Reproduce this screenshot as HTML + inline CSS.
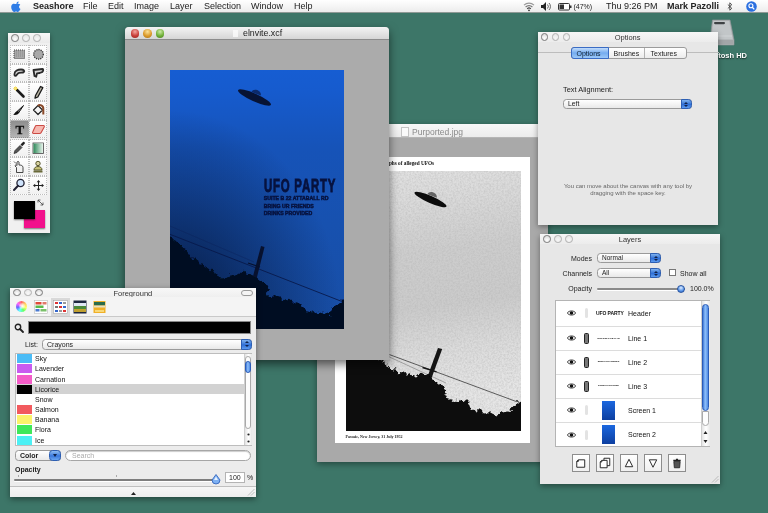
<!DOCTYPE html>
<html>
<head>
<meta charset="utf-8">
<title>Seashore</title>
<style>
html,body{margin:0;padding:0;}
body{width:768px;height:513px;overflow:hidden;background:#3d7668;font-family:"Liberation Sans",sans-serif;font-size:8px;color:#222;position:relative;filter:blur(0.35px);}
.a{position:absolute;}
.t{position:absolute;white-space:nowrap;line-height:1;}
.win{position:absolute;background:#ebebeb;box-shadow:0 2px 6px rgba(0,0,0,.45);}
.tb{position:absolute;left:0;top:0;right:0;background:linear-gradient(#f6f6f6,#e0e0e0);border-bottom:1px solid #bdbdbd;}
.ttl{position:absolute;left:0;right:0;text-align:center;line-height:1;color:#333;}
.dot{position:absolute;width:5.500px;height:5.500px;border-radius:50%;border:1px solid #7a7a7a;background:radial-gradient(circle at 50% 70%,#fff,#d4d4d4);}
.pop{position:absolute;border:1px solid #9a9a9a;border-radius:3.500px;background:linear-gradient(#ffffff,#e9e9e9);box-sizing:border-box;}
.pop i{position:absolute;right:-1px;top:-1px;bottom:-1px;width:11px;border-radius:0 3.500px 3.500px 0;background:linear-gradient(#7fb2ee,#2f6fd6 55%,#5d9cf0);border:1px solid #2c5fb5;box-sizing:border-box;}
.pop i:before{content:"";position:absolute;left:2.5px;top:1.5px;border:2px solid transparent;border-top:0;border-bottom:2.5px solid #10224a;}
.pop i:after{content:"";position:absolute;left:2.5px;bottom:1.5px;border:2px solid transparent;border-bottom:0;border-top:2.5px solid #10224a;}
</style>
</head>
<body>
<!-- MENUBAR -->
<div class="a" id="menubar" style="left:0;top:0;width:768px;height:13px;background:linear-gradient(#ffffff,#ececec);border-bottom:1px solid #8f9a96;box-sizing:border-box;z-index:50;">
<svg class="a" style="left:11px;top:1px" width="11" height="11" viewBox="0 0 22 22"><path d="M15.2 1c.1 1.300-.4 2.500-1.200 3.400-.8.900-2 1.600-3.200 1.500-.1-1.200.5-2.500 1.200-3.300C12.800 1.700 14.100 1.100 15.200 1zM18.900 16c-.5 1.200-.8 1.700-1.400 2.700-.900 1.400-2.200 3.200-3.800 3.200-1.400 0-1.800-.9-3.700-.9-1.900 0-2.300.9-3.700.9-1.600 0-2.800-1.600-3.700-3-2.600-3.900-2.800-8.500-1.200-10.900 1.100-1.700 2.900-2.700 4.600-2.700 1.700 0 2.800.9 4.200.9 1.400 0 2.200-.9 4.200-.9 1.500 0 3.100.8 4.200 2.200-3.700 2-3.100 7.300.3 8.500z" fill="#2f7de6"/></svg>
<span class="t" style="left:33px;top:2px;font-size:9px;font-weight:bold;color:#222" id="m1">Seashore</span>
<span class="t" style="left:83px;top:2px;font-size:9px" id="m2">File</span>
<span class="t" style="left:108px;top:2px;font-size:9px" id="m3">Edit</span>
<span class="t" style="left:134px;top:2px;font-size:9px" id="m4">Image</span>
<span class="t" style="left:170px;top:2px;font-size:9px" id="m5">Layer</span>
<span class="t" style="left:204px;top:2px;font-size:9px" id="m6">Selection</span>
<span class="t" style="left:251px;top:2px;font-size:9px" id="m7">Window</span>
<span class="t" style="left:294px;top:2px;font-size:9px" id="m8">Help</span>
<svg class="a" style="left:523px;top:1px" width="12" height="11" viewBox="0 0 12 11"><path d="M1 4.200a7 7 0 0 1 10 0" fill="none" stroke="#999" stroke-width="1.100"/><path d="M2.600 6a4.800 4.800 0 0 1 6.800 0" fill="none" stroke="#777" stroke-width="1.100"/><path d="M4.200 7.800a2.600 2.600 0 0 1 3.600 0" fill="none" stroke="#444" stroke-width="1.100"/><circle cx="6" cy="9.300" r=".9" fill="#333"/></svg>
<svg class="a" style="left:541px;top:2px" width="10" height="9" viewBox="0 0 10 9"><path d="M0 3h2l3-3v9l-3-3h-2z" fill="#222"/><path d="M6.500 2.500a3 3 0 0 1 0 4M8 1a5 5 0 0 1 0 7" fill="none" stroke="#555" stroke-width=".9"/></svg>
<svg class="a" style="left:558px;top:3px" width="14" height="8" viewBox="0 0 14 8"><rect x=".5" y=".5" width="11" height="6.500" rx="1" fill="#fff" stroke="#333"/><rect x="12" y="2.500" width="1.500" height="2.500" fill="#333"/><rect x="1.500" y="1.500" width="4.500" height="4.500" fill="#333"/></svg>
<span class="t" style="left:573.500px;top:3.300px;font-size:7px" id="m9">(47%)</span>
<span class="t" style="left:606px;top:2px;font-size:9px" id="m10">Thu 9:26 PM</span>
<span class="t" style="left:667px;top:2px;font-size:9px;font-weight:bold;color:#222" id="m11">Mark Pazolli</span>
<svg class="a" style="left:727px;top:2px" width="6" height="9" viewBox="0 0 6 9"><path d="M.8 2.500l4 3.800-2 1.900v-7.400l2 1.900-4 3.800" fill="none" stroke="#333" stroke-width=".8"/></svg>
<svg class="a" style="left:746px;top:1px" width="11" height="11" viewBox="0 0 11 11"><circle cx="5.500" cy="5.500" r="5.300" fill="#2a6fe0"/><circle cx="4.900" cy="4.800" r="2" fill="none" stroke="#fff" stroke-width="1.100"/><path d="M6.300 6.300l2 2.100" stroke="#fff" stroke-width="1.300"/></svg>
</div>

<!-- DESKTOP ICON -->
<div id="hd" class="a" style="left:700px;top:16px;width:68px;height:50px">
<svg class="a" style="left:9px;top:3px" width="26" height="27" viewBox="0 0 26 27"><path d="M3.500 1h17.500l4 20v5h-24v-5z" fill="#b4b8ba" stroke="#8f9496" stroke-width=".7"/><path d="M4.500 2h15.500l3.500 18h-21z" fill="#c2c6c8"/><path d="M1.500 21h23v4.500h-23z" fill="#a2a6a8"/><rect x="5" y="3" width="11" height="2.200" rx="1.100" fill="#3e4244"/><path d="M3 17h20" stroke="#d0d4d6" stroke-width="1"/></svg>
<span class="t" style="left:-3px;top:35.500px;font-size:7.500px;font-weight:bold;color:#fff;text-shadow:0 1px 1.500px rgba(0,0,0,.7)" id="hd-l">Macintosh HD</span>
</div>

<!-- WINDOWS -->
<div class="win" id="w-purported" style="left:317px;top:124px;width:231px;height:338px;background:#a9a9a9;border-radius:4px 4px 0 0;box-shadow:0 2px 6px rgba(0,0,0,.4)">
<div class="tb" style="height:13px;border-radius:4px 4px 0 0;background:linear-gradient(#f7f7f7,#ececec);border-bottom:1px solid #b5b5b5"></div>
<div class="a" style="left:84px;top:3px;width:6px;height:8px;background:#fafafa;border:0.500px solid #c4c4c4"></div>
<span class="t" style="left:95px;top:3px;font-size:8.500px;color:#8a8a8a;margin-top:.5px" id="p-title">Purported.jpg</span>
<div class="a" style="left:18px;top:33px;width:195px;height:286px;background:#fff"></div>
<span class="t" style="right:114px;top:36px;font-size:6.500px;font-weight:bold;font-family:'Liberation Serif',serif;color:#111;transform-origin:100% 50%;transform:scaleX(.81)" id="p-head">photographs of alleged UFOs</span>
<div class="a" id="photo" style="left:29px;top:47px;width:175px;height:260px;overflow:hidden;background:linear-gradient(172deg,#e2e2e2 0%,#dcdcdc 12%,#cdcdcd 32%,#cbcbcb 52%,#dcdcdc 68%,#e6e6e6 85%)">
<svg class="a" style="left:0;top:0" width="175" height="260" viewBox="0 0 175 260">
<defs><filter id="nz" x="0" y="0" width="100%" height="100%"><feTurbulence type="fractalNoise" baseFrequency=".55" numOctaves="3" seed="4"/><feColorMatrix values="0 0 0 0 .45  0 0 0 0 .45  0 0 0 0 .45  1.600 0 0 0 -.55"/></filter>
<filter id="rough" x="-5%" y="-5%" width="110%" height="110%"><feTurbulence type="fractalNoise" baseFrequency=".22" numOctaves="2" seed="9" result="t"/><feDisplacementMap in="SourceGraphic" in2="t" scale="7" xChannelSelector="R" yChannelSelector="G"/></filter></defs>
<rect width="175" height="260" filter="url(#nz)" opacity=".55"/>
<g transform="translate(84.500,28.500) rotate(24)"><ellipse cx="0" cy="0" rx="17.500" ry="3.500" fill="#0c0c0c"/><path d="M-5 -3.600c0-5 9-5.500 10-.5z" fill="#666"/></g>
<path d="M43.500 183.600L171 230.800" stroke="#3a3a3a" stroke-width=".8" fill="none"/>
<path d="M43.500 186L100 212" stroke="#666" stroke-width=".5" fill="none"/>
<path d="M92 177l4.200 1-22 60-4.200-1.200z" fill="#141414"/>
<path d="M76.500 196.500l14 4.300" stroke="#141414" stroke-width="1.400"/>
<g filter="url(#rough)"><path d="M-5 265L-5 179 0.0 178.8 2.3 179.6 4.7 181.8 7.0 179.8 9.3 180.4 11.7 181.1 14.0 179.4 16.5 181.7 19.0 183.0 21.5 184.5 24.0 181.6 26.5 183.4 29.0 183.0 31.2 187.8 33.5 188.5 35.8 186.5 38.0 192.4 41.0 195.3 44.0 196.8 46.5 198.6 49.0 198.3 51.5 198.8 54.0 202.6 56.5 201.5 59.0 203.5 61.2 203.5 63.4 202.3 65.6 204.2 67.8 203.9 70.0 205.7 72.2 203.7 74.4 203.9 76.6 202.8 78.8 203.2 81.0 201.8 83.7 202.6 86.3 207.8 89.0 209.5 91.3 211.4 93.7 213.4 96.0 214.1 99.0 220.6 102.0 227.9 104.7 227.2 107.3 231.0 110.0 229.5 112.3 230.9 114.7 227.8 117.0 229.9 119.2 231.4 121.4 229.3 123.6 232.4 125.8 238.0 128.0 237.8 130.4 241.2 132.9 239.1 135.3 238.3 137.7 241.8 140.1 243.4 142.6 241.6 145.0 241.5 147.4 242.6 149.9 245.6 152.3 244.5 154.7 241.1 157.1 241.6 159.6 240.7 162.0 240.4 164.5 241.3 167.0 235.4 171.0 231.3 175.0 232.0 L180 232 L180 265z" fill="#0a0a0a"/></g>
</svg>
</div>
<span class="t" style="left:28.500px;top:310.500px;font-size:4px;font-weight:bold;font-family:'Liberation Serif',serif;color:#222" id="p-cap">Passaic, New Jersey, 31 July 1952</span>
</div>
<div class="win" id="w-einvite" style="left:125px;top:27px;width:264px;height:332.500px;background:#ababab;border-radius:4px 4px 0 0;box-shadow:0 4px 10px rgba(0,0,0,.55)">
<div class="tb" style="height:12px;border-radius:4px 4px 0 0;background:linear-gradient(#f4f4f4,#d6d6d6);border-bottom:1px solid #8c8c8c"></div>
<div class="a" style="left:5.500px;top:2px;width:8.500px;height:8.500px;border-radius:50%;background:radial-gradient(circle at 50% 30%,#f5a8a0,#c8403a 55%,#9a2620)"></div>
<div class="a" style="left:18px;top:2px;width:8.500px;height:8.500px;border-radius:50%;background:radial-gradient(circle at 50% 30%,#fbe29a,#dc9a2a 55%,#a8741a)"></div>
<div class="a" style="left:30.500px;top:2px;width:8.500px;height:8.500px;border-radius:50%;background:radial-gradient(circle at 50% 30%,#cdeaa8,#72b23a 55%,#4a7e22)"></div>
<div class="a" style="left:108px;top:2.500px;width:5px;height:7px;background:#fdfdfd;opacity:.75"></div>
<span class="t" style="left:118px;top:2px;font-size:8.800px;color:#222" id="e-title">elnvite.xcf</span>
<div class="a" id="poster" style="left:45px;top:43px;width:174px;height:259px;overflow:hidden;background:linear-gradient(#165dd2 0%,#165bce 8%,#1653b8 30%,#1751af 60%,#184ea5 100%)">
<svg class="a" style="left:0;top:0" width="174" height="259" viewBox="0 0 174 259">
<defs><radialGradient id="pg" gradientUnits="userSpaceOnUse" cx="0" cy="240" r="200" gradientTransform="scale(.85,1)"><stop offset="0" stop-color="#03102e" stop-opacity=".85"/><stop offset="1" stop-color="#03102e" stop-opacity="0"/></radialGradient></defs>
<rect width="174" height="259" fill="url(#pg)"/>
<g transform="translate(84.500,27.500) rotate(24)"><ellipse cx="0" cy="0" rx="18" ry="3.900" fill="#071334"/><path d="M-5 -3.800c0-5 9-5.500 10-.5z" fill="#0c2a6a"/></g>
<path d="M0 164.300L174 232.300" stroke="#081a4c" stroke-width=".9" fill="none"/>
<path d="M0 156L84 192" stroke="#0a2058" stroke-width=".6" fill="none" opacity=".6"/>
<path d="M91 176l3.500 1-9 36-4-1z" fill="#07112e"/>
<path d="M78 193l12 4" stroke="#07112e" stroke-width="1.200"/>
<g filter="url(#rough)"><path d="M-5 265L-5 166 0.0 166.8 3.2 170.2 6.3 171.4 9.5 174.5 12.7 178.6 15.8 180.1 19.0 183.9 21.8 189.2 24.7 188.3 27.5 189.8 30.3 194.8 33.2 194.2 36.0 197.5 38.8 198.1 41.5 201.1 44.2 201.2 47.0 205.6 49.7 207.6 52.3 207.1 55.0 209.1 58.0 207.8 61.0 204.1 64.0 206.1 67.0 204.4 70.0 202.9 73.0 201.4 76.0 204.9 79.0 202.9 82.0 205.2 85.0 207.2 88.0 207.7 91.0 209.9 94.5 212.5 98.0 219.3 97.0 224.8 99.6 227.5 102.2 227.9 104.8 225.0 107.4 225.8 110.0 226.8 112.5 230.7 115.0 229.1 117.5 230.6 120.0 229.8 122.5 231.4 125.0 231.5 127.8 232.9 130.6 235.6 133.4 237.2 136.2 240.2 139.0 240.8 141.5 242.3 144.0 242.3 146.5 243.3 149.0 242.3 151.5 240.4 154.0 243.8 156.5 244.7 159.0 244.8 162.5 238.8 166.0 234.9 168.7 231.1 171.3 232.1 174.0 229.0 L180 228 L180 265z" fill="#040b20"/></g>
</svg>
<span class="t" id="ufo" style="left:93.500px;top:105.700px;font-size:19px;font-weight:bold;color:#07123e;letter-spacing:1.300px;-webkit-text-stroke:.9px #07123e;transform-origin:0 0;transform:scaleX(.6)">UFO PARTY</span>
<span class="t" id="l1" style="left:93.800px;top:126.100px;font-size:5.200px;font-weight:bold;color:#07123e;letter-spacing:0;-webkit-text-stroke:.45px #07123e">SUITE B 22 ATTABALL RD</span>
<span class="t" id="l2" style="left:93.800px;top:133.700px;font-size:5.200px;font-weight:bold;color:#07123e;letter-spacing:0;-webkit-text-stroke:.45px #07123e">BRING UR FRIENDS</span>
<span class="t" id="l3" style="left:93.800px;top:141.300px;font-size:5.200px;font-weight:bold;color:#07123e;letter-spacing:0;-webkit-text-stroke:.45px #07123e">DRINKS PROVIDED</span>
</div>
</div>
<div class="win" id="w-tools" style="left:8px;top:33px;width:42px;height:200px;background:#f0f0f0;box-shadow:0 2px 5px rgba(0,0,0,.4)">
<svg width="0" height="0" class="a"><defs><linearGradient id="gr" x1="0" x2="1"><stop offset="0" stop-color="#2f8a5a"/><stop offset="1" stop-color="#e8f4ec"/></linearGradient></defs></svg>
<div class="tb" style="height:10px;border-bottom:0;background:linear-gradient(#f8f8f8,#eaeaea)"></div>
<div class="dot" style="left:3px;top:1px"></div><div class="dot" style="left:14px;top:1px;opacity:.55"></div><div class="dot" style="left:25px;top:1px;opacity:.55"></div>
<div class="a" style="left:2px;top:12.0px;width:18.700px;height:18.700px;background:linear-gradient(#ffffff,#f1f1f1);border:1px dotted #bdbdbd;box-sizing:border-box"><svg class="a" style="left:-.7px;top:-.7px" width="18" height="18" viewBox="0 0 18 18"><rect x="4" y="5" width="10.500" height="8.500" fill="#a9a9a9" stroke="#444" stroke-dasharray="1 1" stroke-width="1"/><path d="M4 7h10.500M4 9h10.500M4 11h10.500" stroke="#777" stroke-width=".6" stroke-dasharray="1 1"/></svg></div><div class="a" style="left:20.7px;top:12.0px;width:18.700px;height:18.700px;background:linear-gradient(#ffffff,#f1f1f1);border:1px dotted #bdbdbd;box-sizing:border-box"><svg class="a" style="left:-.7px;top:-.7px" width="18" height="18" viewBox="0 0 18 18"><circle cx="9.500" cy="9.300" r="4.800" fill="#a9a9a9" stroke="#333" stroke-dasharray="1.200 1" stroke-width="1.300"/></svg></div><div class="a" style="left:2px;top:30.7px;width:18.700px;height:18.700px;background:linear-gradient(#ffffff,#f1f1f1);border:1px dotted #bdbdbd;box-sizing:border-box"><svg class="a" style="left:-.7px;top:-.7px" width="18" height="18" viewBox="0 0 18 18"><path d="M4.500 10c0-3 3.500-4.500 6.500-4.500 3 0 3.800 1.500 2.800 2.500s-2.800 .3-4.800 .8-2.300 3-3.500 3-1-0.800-1-1.800z" fill="#d8d8d8" stroke="#2a2a2a" stroke-width="1.800"/></svg></div><div class="a" style="left:20.7px;top:30.7px;width:18.700px;height:18.700px;background:linear-gradient(#ffffff,#f1f1f1);border:1px dotted #bdbdbd;box-sizing:border-box"><svg class="a" style="left:-.7px;top:-.7px" width="18" height="18" viewBox="0 0 18 18"><path d="M4.500 6l9-1c1 0 1 2 0 2.800l-2.800 1.200-2.700 .3-.8 3.500-1.700-.8z" fill="#d8d8d8" stroke="#2a2a2a" stroke-width="1.800" stroke-linejoin="round"/></svg></div><div class="a" style="left:2px;top:49.4px;width:18.700px;height:18.700px;background:linear-gradient(#ffffff,#f1f1f1);border:1px dotted #bdbdbd;box-sizing:border-box"><svg class="a" style="left:-.7px;top:-.7px" width="18" height="18" viewBox="0 0 18 18"><path d="M7 7l6.500 6.500" stroke="#1a1a1a" stroke-width="2.600" stroke-linecap="round"/><circle cx="5.500" cy="5.500" r="1.800" fill="#f2d23a"/><path d="M5.500 3v5M3 5.500h5" stroke="#f7e68a" stroke-width=".7"/></svg></div><div class="a" style="left:20.7px;top:49.4px;width:18.700px;height:18.700px;background:linear-gradient(#ffffff,#f1f1f1);border:1px dotted #bdbdbd;box-sizing:border-box"><svg class="a" style="left:-.7px;top:-.7px" width="18" height="18" viewBox="0 0 18 18"><path d="M11.500 3.500l2.300 1.200-5 9.300-2.800 1.200 .5-2.700z" fill="#b9b4a4" stroke="#1a1a1a" stroke-width="1.300" stroke-linejoin="round"/></svg></div><div class="a" style="left:2px;top:68.1px;width:18.700px;height:18.700px;background:linear-gradient(#ffffff,#f1f1f1);border:1px dotted #bdbdbd;box-sizing:border-box"><svg class="a" style="left:-.7px;top:-.7px" width="18" height="18" viewBox="0 0 18 18"><path d="M13.500 4.500l-6.500 6 1.500 1.500z" fill="#777" stroke="#1a1a1a" stroke-width="1"/><path d="M7.500 10c-1.800 0-2.300 2.300-4.300 3.800 2.800.5 5.800-.5 6-2.500z" fill="#111"/></svg></div><div class="a" style="left:20.7px;top:68.1px;width:18.700px;height:18.700px;background:linear-gradient(#ffffff,#f1f1f1);border:1px dotted #bdbdbd;box-sizing:border-box"><svg class="a" style="left:-.7px;top:-.7px" width="18" height="18" viewBox="0 0 18 18"><path d="M4.500 9l4.500-4.500 4.500 4.500-4.500 4.500z" fill="#f4f4f4" stroke="#222" stroke-width="1.200" stroke-linejoin="round"/><path d="M9 5c1.500-2 5.500-.5 5.300 3v5.500" fill="none" stroke="#8a4a2a" stroke-width="2"/></svg></div><div class="a" style="left:2px;top:86.8px;width:18.700px;height:18.700px;background:linear-gradient(#8e8e8e,#b4b4b4);border:1px dotted #bdbdbd;box-sizing:border-box"><svg class="a" style="left:-.7px;top:-.7px" width="18" height="18" viewBox="0 0 18 18"></svg><span class="t" style="left:4.500px;top:2.500px;font-family:'Liberation Serif',serif;font-weight:bold;font-size:13px;color:#111;-webkit-text-stroke:.3px #111">T</span></div><div class="a" style="left:20.7px;top:86.8px;width:18.700px;height:18.700px;background:linear-gradient(#ffffff,#f1f1f1);border:1px dotted #bdbdbd;box-sizing:border-box"><svg class="a" style="left:-.7px;top:-.7px" width="18" height="18" viewBox="0 0 18 18"><path d="M7.500 5.500h7c.8 0 1 .8.700 1.500l-3 5.500c-.3.600-1 1-1.700 1h-6c-.8 0-1.200-.8-.8-1.500l2.500-5.500c.2-.6.700-1 1.300-1z" fill="#f6b8b0" stroke="#cc4a44" stroke-width="1.100"/></svg></div><div class="a" style="left:2px;top:105.5px;width:18.700px;height:18.700px;background:linear-gradient(#ffffff,#f1f1f1);border:1px dotted #bdbdbd;box-sizing:border-box"><svg class="a" style="left:-.7px;top:-.7px" width="18" height="18" viewBox="0 0 18 18"><path d="M4 14.500l1-3 5-5 2 2-5 5z" fill="#555" stroke="#222" stroke-width=".7"/><path d="M10.500 5.500l2.500-2.500c1-.8 2.500.7 1.700 1.700l-2.500 2.500z" fill="#222"/></svg></div><div class="a" style="left:20.7px;top:105.5px;width:18.700px;height:18.700px;background:linear-gradient(#ffffff,#f1f1f1);border:1px dotted #bdbdbd;box-sizing:border-box"><svg class="a" style="left:-.7px;top:-.7px" width="18" height="18" viewBox="0 0 18 18"><rect x="4" y="4" width="10.500" height="10.500" fill="#fff" stroke="#444" stroke-width=".8"/><rect x="4.500" y="4.500" width="9.500" height="9.500" fill="url(#gr)"/></svg></div><div class="a" style="left:2px;top:124.2px;width:18.700px;height:18.700px;background:linear-gradient(#ffffff,#f1f1f1);border:1px dotted #bdbdbd;box-sizing:border-box"><svg class="a" style="left:-.7px;top:-.7px" width="18" height="18" viewBox="0 0 18 18"><path d="M6.500 14.500v-5l-1.500-1.500c0-1 1-1.500 2-.5v-3.500c.7-.8 1.500-.8 2 0v3c2 0 4 .5 4 2.500v5z" fill="#f2f2f2" stroke="#333" stroke-width=".9"/><path d="M4 3.500l2 2" stroke="#333" stroke-width=".8"/></svg></div><div class="a" style="left:20.7px;top:124.2px;width:18.700px;height:18.700px;background:linear-gradient(#ffffff,#f1f1f1);border:1px dotted #bdbdbd;box-sizing:border-box"><svg class="a" style="left:-.7px;top:-.7px" width="18" height="18" viewBox="0 0 18 18"><circle cx="9" cy="5.500" r="2.200" fill="#d8d2a0" stroke="#4a4a20" stroke-width=".9"/><path d="M5 12c0-2.500 2-3.500 4-3.500s4 1 4 3.500z" fill="#c8c27a" stroke="#4a4a20" stroke-width=".9"/><rect x="4.500" y="12.500" width="9" height="2" fill="#6a6a3a"/></svg></div><div class="a" style="left:2px;top:142.9px;width:18.700px;height:18.700px;background:linear-gradient(#ffffff,#f1f1f1);border:1px dotted #bdbdbd;box-sizing:border-box"><svg class="a" style="left:-.7px;top:-.7px" width="18" height="18" viewBox="0 0 18 18"><circle cx="10.500" cy="7" r="3.600" fill="#cfe3fb" stroke="#223" stroke-width="1.300"/><path d="M8 9.800l-4 4.200" stroke="#223" stroke-width="2" stroke-linecap="round"/></svg></div><div class="a" style="left:20.7px;top:142.9px;width:18.700px;height:18.700px;background:linear-gradient(#ffffff,#f1f1f1);border:1px dotted #bdbdbd;box-sizing:border-box"><svg class="a" style="left:-.7px;top:-.7px" width="18" height="18" viewBox="0 0 18 18"><path d="M9.500 5.500v8M5.500 9.500h8" stroke="#222" stroke-width="1"/><path d="M9.500 4l1.800 2.200h-3.600zM9.500 15l1.800-2.200h-3.600zM4 9.500l2.200-1.800v3.600zM15 9.500l-2.200-1.800v3.600z" fill="#222"/></svg></div>
<div class="a" style="left:16px;top:177px;width:21px;height:18px;background:#f2118c;box-shadow:0 1px 1.500px rgba(0,0,0,.5)"></div>
<div class="a" style="left:6px;top:168px;width:21px;height:18px;background:#000;box-shadow:0 1px 1.500px rgba(0,0,0,.5)"></div>
<svg class="a" style="left:29px;top:166px" width="8" height="8" viewBox="0 0 8 8"><path d="M1 1l5 5M1 1h2.500M1 1v2.500M6 6h-2.500M6 6v-2.500" stroke="#444" stroke-width=".8" fill="none"/></svg>
</div>
<div class="win" id="w-options" style="left:537.500px;top:32.400px;width:180.200px;height:192.600px;background:#e7e7e7;box-shadow:0 2px 6px rgba(0,0,0,.4)">
<div class="tb" style="height:10px;border-bottom:0;background:linear-gradient(#f6f6f6,#ececec)"></div>
<div class="dot" style="left:3px;top:1px"></div><div class="dot" style="left:14px;top:1px;opacity:.55"></div><div class="dot" style="left:25px;top:1px;opacity:.55"></div>
<div class="ttl" style="top:2px;font-size:7.500px" id="o-title">Options</div>
<div class="a" style="left:0;top:20px;width:181px;height:1px;background:#bdbdbd"></div>
<div class="a" style="left:33px;top:15px;width:116px;height:12px;border:1px solid #9b9b9b;border-radius:3px;box-sizing:border-box;background:linear-gradient(#ffffff,#ececec)"></div>
<div class="a" style="left:33px;top:15px;width:38px;height:12px;border:1px solid #3a6cc4;border-radius:3px 0 0 3px;box-sizing:border-box;background:linear-gradient(#c2dcfa,#74acf0 50%,#9cc8f8)"></div>
<div class="a" style="left:106px;top:16px;width:1px;height:10px;background:#b3b3b3"></div>
<span class="t" style="left:39px;top:18px;font-size:7px;color:#123" id="o-t1">Options</span>
<span class="t" style="left:76px;top:18px;font-size:7px" id="o-t2">Brushes</span>
<span class="t" style="left:113px;top:18px;font-size:7px" id="o-t3">Textures</span>
<span class="t" style="left:25.500px;top:53.700px;font-size:7.400px" id="o-ta">Text Alignment:</span>
<div class="pop" style="left:25.500px;top:66.700px;width:128.500px;height:10px"><i></i></div>
<span class="t" style="left:30.500px;top:68.500px;font-size:6.800px" id="o-left">Left</span>
<span class="t" style="left:0;width:181px;text-align:center;top:150.700px;font-size:6px;color:#666" id="o-h1">You can move about the canvas with any tool by</span>
<span class="t" style="left:0;width:181px;text-align:center;top:157.600px;font-size:6px;color:#666" id="o-h2">dragging with the space key.</span>
</div>
<div class="win" id="w-layers" style="left:540px;top:234px;width:180px;height:250px;background:#e7e7e7;box-shadow:0 2px 6px rgba(0,0,0,.4)">
<div class="tb" style="height:10px;border-bottom:0;background:linear-gradient(#f6f6f6,#ececec)"></div>
<div class="dot" style="left:3px;top:1px"></div><div class="dot" style="left:14px;top:1px;opacity:.55"></div><div class="dot" style="left:25px;top:1px;opacity:.55"></div>
<div class="ttl" style="top:2px;font-size:7.500px" id="l-title">Layers</div>
<span class="t" style="right:128px;top:21px;font-size:7px" id="l-modes">Modes</span>
<div class="pop" style="left:57px;top:19px;width:64px;height:10px"><i></i></div>
<span class="t" style="left:62px;top:21px;font-size:6.500px">Normal</span>
<span class="t" style="right:128px;top:36px;font-size:7px" id="l-ch">Channels</span>
<div class="pop" style="left:57px;top:34px;width:64px;height:10px"><i></i></div>
<span class="t" style="left:62px;top:36px;font-size:6.500px">All</span>
<div class="a" style="left:129px;top:35px;width:7px;height:7px;border:1px solid #777;background:#fff;box-sizing:border-box"></div>
<span class="t" style="left:140px;top:36px;font-size:7px" id="l-show">Show all</span>
<span class="t" style="right:128px;top:51px;font-size:7px" id="l-op">Opacity</span>
<div class="a" style="left:57px;top:54px;width:88px;height:2px;background:#8a8a8a;border-radius:1px;box-shadow:0 1px 0 #fff"></div>
<div class="a" style="left:137px;top:51px;width:8px;height:8px;border-radius:50%;background:radial-gradient(circle at 50% 30%,#dcecff,#5a95e8 60%,#2a60c0);border:0.500px solid #2a55a0;box-sizing:border-box"></div>
<span class="t" style="left:150px;top:51px;font-size:7px" id="l-pct">100.0%</span>
<div class="a" style="left:15px;top:66px;width:155px;height:147px;background:#fff;border:1px solid #b4b4b4;box-sizing:border-box"></div>
<svg class="a" style="left:27px;top:76.0px" width="9" height="6" viewBox="0 0 9 6"><path d="M.3 3c1.500-2.800 6.900-2.800 8.400 0-1.500 2.800-6.900 2.800-8.400 0z" fill="#fff" stroke="#222" stroke-width=".8"/><circle cx="4.500" cy="3" r="1.800" fill="#111"/></svg><div class="a" style="left:44.500px;top:74.0px;width:3px;height:10px;border-radius:1.500px;background:#e3e3e3"></div><span class="t" style="left:56px;width:25px;text-align:center;top:76.5px;font-size:5px;font-weight:bold;color:#111;letter-spacing:-.1px">UFO PARTY</span><span class="t" style="left:88px;top:75.5px;font-size:7px;color:#111">Header</span><svg class="a" style="left:27px;top:101.0px" width="9" height="6" viewBox="0 0 9 6"><path d="M.3 3c1.500-2.800 6.900-2.800 8.400 0-1.500 2.800-6.900 2.800-8.400 0z" fill="#fff" stroke="#222" stroke-width=".8"/><circle cx="4.500" cy="3" r="1.800" fill="#111"/></svg><div class="a" style="left:44px;top:99.0px;width:3px;height:9px;border:1px solid #222;border-radius:1.500px;background:#777;box-sizing:content-box"></div><span class="t" style="left:56px;width:25px;text-align:center;top:103.0px;font-size:2px;font-weight:bold;color:#111;letter-spacing:-.1px">SUITE B 22 ATTABALL RD</span><span class="t" style="left:88px;top:100.5px;font-size:7px;color:#111">Line 1</span><div class="a" style="left:16px;top:92px;width:145px;height:1px;background:#dcdcdc"></div><svg class="a" style="left:27px;top:125.0px" width="9" height="6" viewBox="0 0 9 6"><path d="M.3 3c1.500-2.800 6.900-2.800 8.400 0-1.500 2.800-6.900 2.800-8.400 0z" fill="#fff" stroke="#222" stroke-width=".8"/><circle cx="4.500" cy="3" r="1.800" fill="#111"/></svg><div class="a" style="left:44px;top:123.0px;width:3px;height:9px;border:1px solid #222;border-radius:1.500px;background:#777;box-sizing:content-box"></div><span class="t" style="left:56px;width:25px;text-align:center;top:126.8px;font-size:2.4px;font-weight:bold;color:#111;letter-spacing:-.1px">BRING UR FRIENDS</span><span class="t" style="left:88px;top:124.5px;font-size:7px;color:#111">Line 2</span><div class="a" style="left:16px;top:116px;width:145px;height:1px;background:#dcdcdc"></div><svg class="a" style="left:27px;top:149.0px" width="9" height="6" viewBox="0 0 9 6"><path d="M.3 3c1.500-2.800 6.900-2.800 8.400 0-1.500 2.800-6.900 2.800-8.400 0z" fill="#fff" stroke="#222" stroke-width=".8"/><circle cx="4.500" cy="3" r="1.800" fill="#111"/></svg><div class="a" style="left:44px;top:147.0px;width:3px;height:9px;border:1px solid #222;border-radius:1.500px;background:#777;box-sizing:content-box"></div><span class="t" style="left:56px;width:25px;text-align:center;top:150.8px;font-size:2.4px;font-weight:bold;color:#111;letter-spacing:-.1px">DRINKS PROVIDED</span><span class="t" style="left:88px;top:148.5px;font-size:7px;color:#111">Line 3</span><div class="a" style="left:16px;top:140px;width:145px;height:1px;background:#dcdcdc"></div><svg class="a" style="left:27px;top:173.0px" width="9" height="6" viewBox="0 0 9 6"><path d="M.3 3c1.500-2.800 6.900-2.800 8.400 0-1.500 2.800-6.900 2.800-8.400 0z" fill="#fff" stroke="#222" stroke-width=".8"/><circle cx="4.500" cy="3" r="1.800" fill="#111"/></svg><div class="a" style="left:44.500px;top:171.0px;width:3px;height:10px;border-radius:1.500px;background:#e3e3e3"></div><div class="a" style="left:62px;top:166.5px;width:13px;height:19px;background:linear-gradient(#1b67df,#0d3fa0)"></div><span class="t" style="left:88px;top:172.5px;font-size:7px;color:#111">Screen 1</span><div class="a" style="left:16px;top:164px;width:145px;height:1px;background:#dcdcdc"></div><svg class="a" style="left:27px;top:197.5px" width="9" height="6" viewBox="0 0 9 6"><path d="M.3 3c1.500-2.800 6.900-2.800 8.400 0-1.500 2.800-6.900 2.800-8.400 0z" fill="#fff" stroke="#222" stroke-width=".8"/><circle cx="4.500" cy="3" r="1.800" fill="#111"/></svg><div class="a" style="left:44.500px;top:195.5px;width:3px;height:10px;border-radius:1.500px;background:#e3e3e3"></div><div class="a" style="left:62px;top:191.0px;width:13px;height:19px;background:linear-gradient(#1b67df,#0d3fa0)"></div><span class="t" style="left:88px;top:197.0px;font-size:7px;color:#111">Screen 2</span><div class="a" style="left:16px;top:188px;width:145px;height:1px;background:#dcdcdc"></div>
<div class="a" style="left:161px;top:67px;width:8px;height:145px;background:linear-gradient(90deg,#e4e4e4,#ffffff 50%,#e8e8e8);border-left:1px solid #cfcfcf"></div>
<div class="a" style="left:162px;top:70px;width:7px;height:107px;border-radius:3.500px;background:linear-gradient(90deg,#3f78d8,#8fc0fa 45%,#4f8ae4);border:0.500px solid #2b5cb8;box-sizing:border-box"></div>
<div class="a" style="left:162px;top:177px;width:7px;height:15px;border-radius:0 0 3.500px 3.500px;background:#fdfdfd;border:0.500px solid #aaa;box-sizing:border-box"></div>
<svg class="a" style="left:162px;top:195px" width="7" height="16" viewBox="0 0 7 16"><path d="M3.500 2l2 3h-4zM3.500 14l2-3h-4z" fill="#222"/></svg>
<div class="a" style="left:31.5px;top:220px;width:18px;height:18px;border:1px solid #8d8d8d;box-sizing:border-box;background:linear-gradient(#ffffff,#f0f0f0)"><svg class="a" style="left:-1px;top:-1px" width="18" height="18" viewBox="0 0 17 17"><path d="M6 5.500h6v7h-7.500v-5.500zM6 5.500v1.500h-1.500" fill="#fff" stroke="#222" stroke-width=".9"/></svg></div><div class="a" style="left:55.5px;top:220px;width:18px;height:18px;border:1px solid #8d8d8d;box-sizing:border-box;background:linear-gradient(#ffffff,#f0f0f0)"><svg class="a" style="left:-1px;top:-1px" width="18" height="18" viewBox="0 0 17 17"><path d="M7.500 4h5.500v7h-5.500z" fill="#fff" stroke="#222" stroke-width=".9"/><path d="M5.500 6h5v7h-6.500v-5.500zM5.500 6v1.500h-1.500" fill="#fff" stroke="#222" stroke-width=".9"/></svg></div><div class="a" style="left:79.5px;top:220px;width:18px;height:18px;border:1px solid #8d8d8d;box-sizing:border-box;background:linear-gradient(#ffffff,#f0f0f0)"><svg class="a" style="left:-1px;top:-1px" width="18" height="18" viewBox="0 0 17 17"><path d="M8.500 5l3.500 7h-7z" fill="#fff" stroke="#222" stroke-width=".9"/></svg></div><div class="a" style="left:103.5px;top:220px;width:18px;height:18px;border:1px solid #8d8d8d;box-sizing:border-box;background:linear-gradient(#ffffff,#f0f0f0)"><svg class="a" style="left:-1px;top:-1px" width="18" height="18" viewBox="0 0 17 17"><path d="M8.500 12.500l3.500-7h-7z" fill="#fff" stroke="#222" stroke-width=".9"/></svg></div><div class="a" style="left:127.5px;top:220px;width:18px;height:18px;border:1px solid #8d8d8d;box-sizing:border-box;background:linear-gradient(#ffffff,#f0f0f0)"><svg class="a" style="left:-1px;top:-1px" width="18" height="18" viewBox="0 0 17 17"><path d="M5.500 7h6l-.5 6h-5z" fill="#555" stroke="#222" stroke-width=".8"/><path d="M5 6h7M7.500 5h2" stroke="#222" stroke-width="1"/></svg></div>
<svg class="a" style="left:171px;top:241px" width="8" height="8" viewBox="0 0 8 8"><path d="M7.500 1l-6.500 6.500M7.500 4l-3.500 3.500" stroke="#aaa" stroke-width=".7"/></svg>
</div>
<div class="win" id="w-fg" style="left:10px;top:287.700px;width:245.700px;height:209.300px;background:#ececec;box-shadow:0 2px 6px rgba(0,0,0,.45)">
<div class="tb" style="height:9px;border-bottom:0;background:linear-gradient(#f8f8f8,#efefef)"></div>
<div class="dot" style="left:3px;top:1px"></div><div class="dot" style="left:14px;top:1px;opacity:.55"></div><div class="dot" style="left:25px;top:1px"></div>
<div class="ttl" style="top:2px;font-size:7.500px" id="f-title">Foreground</div>
<div class="a" style="left:231px;top:2px;width:10px;height:4px;border:1px solid #999;border-radius:3px;background:#f4f4f4"></div>
<div class="a" style="left:0;top:9px;width:246px;height:19px;background:#f4f4f4"></div>
<div class="a" style="left:41px;top:10px;width:19px;height:18px;background:#d9d9d9"></div>
<div class="a" style="left:6px;top:13px;width:11px;height:11px;border-radius:50%;background:conic-gradient(#f66,#fc6,#ff6,#6f6,#6ff,#66f,#f6f,#f66)"></div>
<div class="a" style="left:8.500px;top:15.500px;width:6px;height:6px;border-radius:50%;background:radial-gradient(#fff,rgba(255,255,255,0))"></div>
<svg class="a" style="left:24px;top:12px" width="14" height="14" viewBox="0 0 14 14"><rect x=".5" y=".5" width="13" height="13" fill="#fff" stroke="#bbb" stroke-width=".6"/><rect x="1.500" y="2" width="6" height="2.500" fill="#e04a3a"/><rect x="8.500" y="2" width="4" height="2.500" fill="#e07a6a"/><rect x="1.500" y="5.500" width="8" height="2.500" fill="#5aba4a"/><rect x="1.500" y="9" width="4" height="2.500" fill="#4a7ad0"/><rect x="6.500" y="9" width="6" height="2.500" fill="#7ac06a"/></svg>
<svg class="a" style="left:43px;top:12px" width="15" height="14" viewBox="0 0 15 14"><rect x=".5" y=".5" width="14" height="13" fill="#fff" stroke="#aaa" stroke-width=".6"/><rect x="2" y="2" width="3" height="2" fill="#d33"/><rect x="6" y="2" width="3" height="2" fill="#36c"/><rect x="10" y="2" width="3" height="2" fill="#999"/><rect x="2" y="6" width="3" height="2" fill="#777"/><rect x="6" y="6" width="3" height="2" fill="#d33"/><rect x="10" y="6" width="3" height="2" fill="#36c"/><rect x="2" y="10" width="3" height="2" fill="#36c"/><rect x="6" y="10" width="3" height="2" fill="#999"/><rect x="10" y="10" width="3" height="2" fill="#d33"/></svg>
<svg class="a" style="left:63px;top:12px" width="14" height="14" viewBox="0 0 14 14"><rect x=".5" y=".5" width="13" height="13" fill="#1d2740"/><rect x="1" y="3" width="12" height="3" fill="#dfe7f4"/><rect x="1" y="6" width="12" height="3" fill="#4a8a3a"/><rect x="1" y="9" width="12" height="3" fill="#c0a030"/></svg>
<svg class="a" style="left:83px;top:12px" width="13" height="14" viewBox="0 0 13 14"><rect x=".5" y="1" width="12" height="12" fill="#f0b028"/><rect x="1" y="2" width="11" height="3.500" fill="#2a6a4a"/><rect x="1" y="5.500" width="11" height="2" fill="#e8e0c0"/><rect x="2" y="10" width="9" height="2" fill="#f8d878"/></svg>
<div class="a" style="left:0;top:28px;width:246px;height:1px;background:#c9c9c9"></div>
<svg class="a" style="left:4px;top:35px" width="10" height="10" viewBox="0 0 10 10"><circle cx="4" cy="4" r="2.700" fill="none" stroke="#222" stroke-width="1.400"/><path d="M6 6l3 3" stroke="#222" stroke-width="1.800" stroke-linecap="round"/></svg>
<div class="a" style="left:18px;top:33px;width:223px;height:13px;background:#000;border:0.500px solid #888;box-sizing:border-box"></div>
<span class="t" style="left:15px;top:53px;font-size:7px" id="f-list">List:</span>
<div class="pop" style="left:32px;top:51px;width:210px;height:11px"><i></i></div>
<span class="t" style="left:37px;top:53px;font-size:7px" id="f-cray">Crayons</span>
<div class="a" style="left:5px;top:65px;width:237px;height:93px;background:#fff;border:1px solid #bdbdbd;box-sizing:border-box"></div>
<div class="a" style="left:7px;top:66.50px;width:15px;height:9px;background:#4bbcf6"></div><span class="t" style="left:25px;top:67.50px;font-size:7px;color:#111">Sky</span><div class="a" style="left:7px;top:76.67px;width:15px;height:9px;background:#c95bf0"></div><span class="t" style="left:25px;top:77.67px;font-size:7px;color:#111">Lavender</span><div class="a" style="left:7px;top:86.84px;width:15px;height:9px;background:#f45cc8"></div><span class="t" style="left:25px;top:87.84px;font-size:7px;color:#111">Carnation</span><div class="a" style="left:6px;top:96.51px;width:228px;height:10px;background:#d2d2d2"></div><div class="a" style="left:7px;top:97.01px;width:15px;height:9px;background:#000000"></div><span class="t" style="left:25px;top:98.01px;font-size:7px;color:#111">Licorice</span><div class="a" style="left:7px;top:107.18px;width:15px;height:9px;background:#ffffff"></div><span class="t" style="left:25px;top:108.18px;font-size:7px;color:#111">Snow</span><div class="a" style="left:7px;top:117.35px;width:15px;height:9px;background:#f25a5e"></div><span class="t" style="left:25px;top:118.35px;font-size:7px;color:#111">Salmon</span><div class="a" style="left:7px;top:127.52px;width:15px;height:9px;background:#fbf36a"></div><span class="t" style="left:25px;top:128.52px;font-size:7px;color:#111">Banana</span><div class="a" style="left:7px;top:137.69px;width:15px;height:9px;background:#3fe85a"></div><span class="t" style="left:25px;top:138.69px;font-size:7px;color:#111">Flora</span><div class="a" style="left:7px;top:147.86px;width:15px;height:9px;background:#4cf0f4"></div><span class="t" style="left:25px;top:148.86px;font-size:7px;color:#111">Ice</span>
<div class="a" style="left:234px;top:66px;width:7px;height:91px;background:linear-gradient(90deg,#e2e2e2,#ffffff 50%,#e6e6e6);border-left:1px solid #cfcfcf"></div>
<div class="a" style="left:234.500px;top:68px;width:6.500px;height:73px;border-radius:3px;background:#fcfcfc;border:0.500px solid #aaa;box-sizing:border-box"></div>
<div class="a" style="left:234.500px;top:73px;width:6.500px;height:12px;border-radius:3px;background:linear-gradient(90deg,#3f78d8,#8fc0fa 45%,#4f8ae4);border:0.500px solid #2b5cb8;box-sizing:border-box"></div>
<svg class="a" style="left:234.500px;top:143px" width="7" height="14" viewBox="0 0 7 14"><circle cx="3.500" cy="3.500" r="1.100" fill="#222"/><circle cx="3.500" cy="10.500" r="1.100" fill="#222"/></svg>
<div class="pop" style="left:5px;top:162px;width:46px;height:11px"></div><div class="a" style="left:39px;top:162px;width:12px;height:11px;border-radius:3.500px;background:linear-gradient(#8fbdf2,#3a78dc 55%,#6aa6f2);border:1px solid #2c5fb5;box-sizing:border-box"><div class="a" style="left:2.500px;top:3px;border:2.500px solid transparent;border-bottom:0;border-top:3px solid #10224a"></div></div>
<span class="t" style="left:10px;top:164px;font-size:7px;font-weight:bold" id="f-color">Color</span>
<div class="a" style="left:55px;top:162px;width:186px;height:11px;border:1px solid #a6a6a6;border-radius:5.500px;background:#fff;box-sizing:border-box;box-shadow:inset 0 1px 1px rgba(0,0,0,.2)"></div>
<span class="t" style="left:62px;top:164px;font-size:7px;color:#aaa" id="f-search">Search</span>
<span class="t" style="left:5px;top:178px;font-size:7px;font-weight:bold;color:#222" id="f-op">Opacity</span>
<div class="a" style="left:4px;top:191px;width:203px;height:2px;background:#7e7e7e;border-radius:1px;box-shadow:0 1px 0 #fff"></div>
<div class="a" style="left:8px;top:187px;width:1px;height:2px;background:#aaa"></div><div class="a" style="left:106px;top:187px;width:1px;height:2px;background:#aaa"></div>
<svg class="a" style="left:201px;top:186px" width="10" height="11" viewBox="0 0 10 11"><path d="M5 .5l4 5.500a4 4 0 1 1-8 0z" fill="#7db0f2" stroke="#2a5cb8" stroke-width=".8"/><path d="M5 2.500l2 3.500h-4z" fill="#e8f2ff"/></svg>
<div class="a" style="left:215px;top:184px;width:20px;height:11px;background:#fff;border:1px solid #b4b4b4;box-sizing:border-box"></div>
<span class="t" style="left:219px;top:186px;font-size:7px" id="f-100">100</span>
<span class="t" style="left:237px;top:186px;font-size:7px" id="f-pct">%</span>
<div class="a" style="left:0;top:198px;width:246px;height:1px;background:#bfbfbf"></div>
<div class="a" style="left:0;top:199px;width:246px;height:10px;background:linear-gradient(#f6f6f6,#ededed)"></div>
<svg class="a" style="left:121px;top:204px" width="5" height="3" viewBox="0 0 5 3"><path d="M0 3l2.500-3 2.500 3z" fill="#222"/></svg>
<svg class="a" style="left:237px;top:200px" width="8" height="8" viewBox="0 0 8 8"><path d="M7.500 1l-6.500 6.500M7.500 4l-3.500 3.500" stroke="#aaa" stroke-width=".7"/></svg>
</div>
</body>
</html>
